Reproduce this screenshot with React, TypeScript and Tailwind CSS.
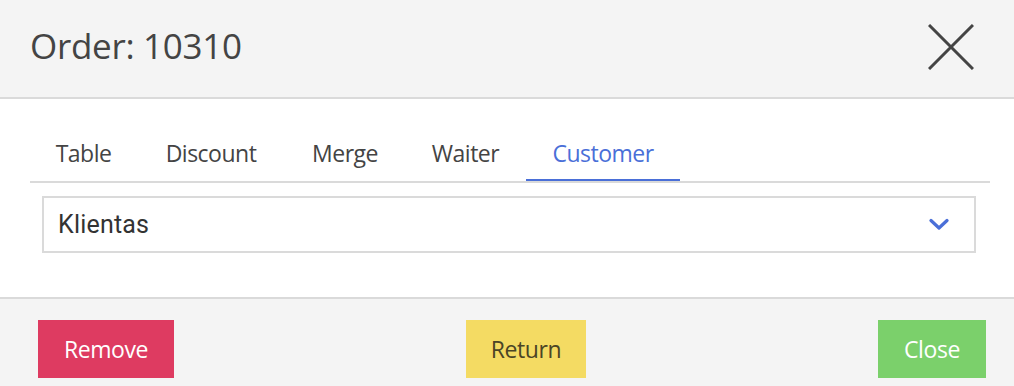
import React, { useState } from 'react';

const tabs = [
  { label: 'Table', width: 'w-[107px]' },
  { label: 'Discount', width: 'w-[148px]' },
  { label: 'Merge', width: 'w-[120px]' },
  { label: 'Waiter', width: 'w-[121px]' },
  { label: 'Customer', width: 'w-[154px]' },
];

const App = () => {
  const [active, setActive] = useState('Customer');

  return (
    <div className="w-[1014px] h-[386px] flex flex-col bg-white font-['Open_Sans',sans-serif] text-[#444]">
      {/* header */}
      <div className="h-[99px] shrink-0 flex items-center justify-between bg-[#f4f4f4] border-b-2 border-[#dadada] pl-[30px] pr-[40px]">
        <h1 className="text-[35px] leading-none tracking-[-0.3px] text-[#444] pb-[6px]">Order: 10310</h1>
        <button type="button" className="w-[46px] h-[46px] flex items-center justify-center mb-[4px]">
          <svg width="46" height="46" viewBox="0 0 46 46">
            <path d="M1 1 L45 45 M45 1 L1 45" stroke="#444" strokeWidth="3" fill="none" />
          </svg>
        </button>
      </div>

      {/* body */}
      <div className="flex-1 px-[30px] pt-[35px]">
        <div className="flex border-b-2 border-[#dadada] w-[960px]">
          {tabs.map((tab) => (
            <button
              key={tab.label}
              type="button"
              onClick={() => setActive(tab.label)}
              className={`${tab.width} h-[47px] text-[23px] tracking-[-0.5px] text-center pb-[6px] border-b-2 ${
                active === tab.label ? 'text-[#4a6fd8] border-[#4a6fd8]' : 'text-[#444] border-transparent'
              }`}
            >
              {tab.label}
            </button>
          ))}
        </div>
        <div className="mt-[13px] ml-[12px] w-[934px] h-[57px] border-2 border-[#dadada] flex items-center justify-between pl-[14px] pr-[25px]">
          <span className="font-['Roboto',sans-serif] text-[25px] tracking-[0.2px] text-[#333]">Klientas</span>
          <svg width="20" height="13" viewBox="0 0 20 13">
            <path d="M2 2.5 L10 10 L18 2.5" stroke="#4a6fd8" strokeWidth="3.2" fill="none" strokeLinecap="round" strokeLinejoin="round" />
          </svg>
        </div>
      </div>

      {/* footer */}
      <div className="h-[89px] shrink-0 bg-[#f4f4f4] border-t-2 border-[#dadada] flex items-start justify-between pt-[21px] pl-[38px] pr-[28px]">
        <button type="button" className="w-[136px] h-[58px] bg-[#de3b61] text-white text-[23px] tracking-[-0.4px]">Remove</button>
        <button type="button" className="w-[120px] h-[58px] bg-[#f4db63] text-[#4a4526] text-[23px] tracking-[-0.4px]">Return</button>
        <button type="button" className="w-[108px] h-[58px] bg-[#7bd06b] text-white text-[23px] tracking-[-0.4px]">Close</button>
      </div>
    </div>
  );
};

export default App;
